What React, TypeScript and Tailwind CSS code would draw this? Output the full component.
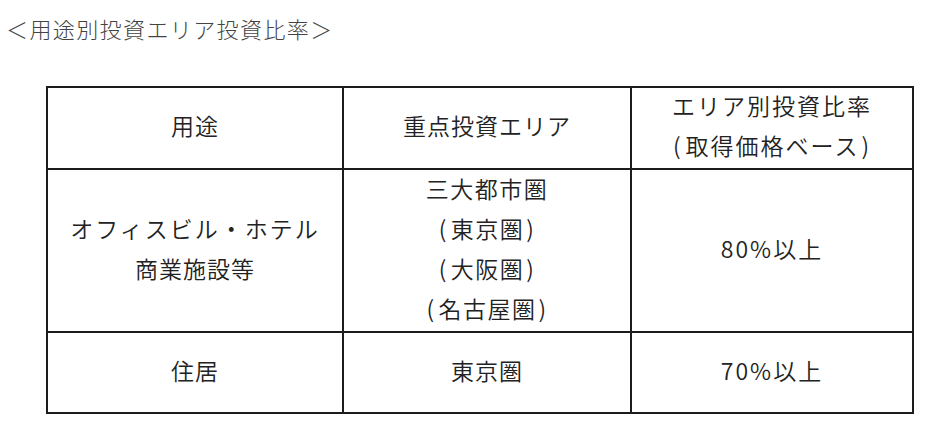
import React from "react";

const font = { fontFamily: '"Noto Sans CJK JP", "Noto Sans", sans-serif' };

const cell = "border-2 border-[#1c1c1c] p-0";

function P({ children }: { children: React.ReactNode }) {
  return (
    <div>
      <span className="mr-[3px]">(</span>
      {children}
      <span className="ml-[2px]">)</span>
    </div>
  );
}

export default function App() {
  return (
    <div className="w-[932px] h-[435px] bg-white relative overflow-hidden" style={font}>
      <div className="pl-[6px] pt-[14px] text-[22px] leading-[28px] font-light text-[#444] tracking-[1.4px]">
        ＜用途別投資エリア投資比率＞
      </div>
      <div className="pl-[46px] pt-[44px]">
        <table className="border-collapse text-[23px] leading-[40px] font-[350] text-[#222] text-center tracking-[1px]">
          <tbody>
            <tr className="h-[82px]">
              <td className={`w-[296px] ${cell}`}>
                <div className="-translate-y-[3px]">用途</div>
              </td>
              <td className={`w-[288px] ${cell}`}>
                <div className="-translate-y-[3px]">重点投資エリア</div>
              </td>
              <td className={`w-[282px] ${cell}`}>
                <div className="-translate-y-[3px] tracking-[2px]">
                  <div>エリア別投資比率</div>
                  <P>取得価格ベース</P>
                </div>
              </td>
            </tr>
            <tr className="h-[163px]">
              <td className={cell}>
                <div className="-translate-y-[3px]">
                  <div className="tracking-[2px]">オフィスビル・ホテル</div>
                  <div>商業施設等</div>
                </div>
              </td>
              <td className={cell}>
                <div className="-translate-y-[3px] tracking-[1.5px]">
                  <div>三大都市圏</div>
                  <P>東京圏</P>
                  <P>大阪圏</P>
                  <P>名古屋圏</P>
                </div>
              </td>
              <td className={cell}>
                <div className="-translate-y-[3px] tracking-[2px]">80%以上</div>
              </td>
            </tr>
            <tr className="h-[81px]">
              <td className={cell}>
                <div className="-translate-y-[3px]">住居</div>
              </td>
              <td className={cell}>
                <div className="-translate-y-[3px]">東京圏</div>
              </td>
              <td className={cell}>
                <div className="-translate-y-[3px] tracking-[2px]">70%以上</div>
              </td>
            </tr>
          </tbody>
        </table>
      </div>
    </div>
  );
}
